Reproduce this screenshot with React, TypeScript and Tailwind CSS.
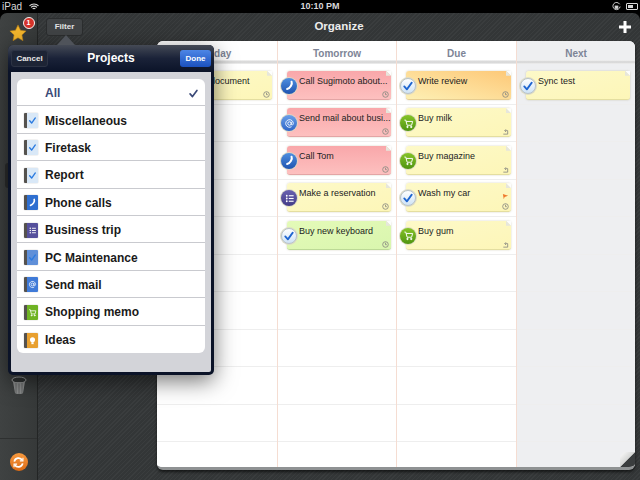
import React from 'react';

type IconKind = 'phone' | 'at' | 'check' | 'cart' | 'list';
type Tone = 'yellow' | 'red' | 'orange' | 'green';
type Mark = 'clock' | 'repeat';

interface Task {
  title: string;
  icon?: IconKind;
  tone: Tone;
  mark?: Mark;
  flag?: boolean;
}

const tones: Record<Tone, string> = {
  yellow: 'bg-gradient-to-br from-[#fdf9c8] to-[#fdf6b8] border-b-[#e4dea0]',
  red: 'bg-gradient-to-b from-[#f9a7aa] to-[#fdc0bf] border-b-[#e3a5a5]',
  orange: 'bg-gradient-to-bl from-[#fdc877] to-[#fdf0b4] border-b-[#e6cc90]',
  green: 'bg-gradient-to-br from-[#e4fab8] to-[#d9f6ae] border-b-[#bcd996]',
};

const columns: { name: string; tasks: Task[]; muted?: boolean }[] = [
  { name: 'Today', tasks: [{ title: 'Review document', tone: 'yellow', mark: 'clock' }] },
  {
    name: 'Tomorrow',
    tasks: [
      { title: 'Call Sugimoto about...', icon: 'phone', tone: 'red', mark: 'clock' },
      { title: 'Send mail about busi...', icon: 'at', tone: 'red', mark: 'clock' },
      { title: 'Call Tom', icon: 'phone', tone: 'red', mark: 'clock' },
      { title: 'Make a reservation', icon: 'list', tone: 'yellow', mark: 'clock' },
      { title: 'Buy new keyboard', icon: 'check', tone: 'green', mark: 'clock' },
    ],
  },
  {
    name: 'Due',
    tasks: [
      { title: 'Write review', icon: 'check', tone: 'orange', mark: 'clock' },
      { title: 'Buy milk', icon: 'cart', tone: 'yellow', mark: 'repeat' },
      { title: 'Buy magazine', icon: 'cart', tone: 'yellow', mark: 'repeat' },
      { title: 'Wash my car', icon: 'check', tone: 'yellow', mark: 'clock', flag: true },
      { title: 'Buy gum', icon: 'cart', tone: 'yellow', mark: 'repeat' },
    ],
  },
  { name: 'Next', muted: true, tasks: [{ title: 'Sync test', icon: 'check', tone: 'yellow' }] },
];

const projects: { name: string; book: string; glyph: IconKind | 'bulb' }[] = [
  { name: 'Miscellaneous', book: 'bg-[#d9e8f7]', glyph: 'check' },
  { name: 'Firetask', book: 'bg-[#d9e8f7]', glyph: 'check' },
  { name: 'Report', book: 'bg-[#d9e8f7]', glyph: 'check' },
  { name: 'Phone calls', book: 'bg-[#2f6fd0]', glyph: 'phone' },
  { name: 'Business trip', book: 'bg-[#55509c]', glyph: 'list' },
  { name: 'PC Maintenance', book: 'bg-[#5f8fd8]', glyph: 'check' },
  { name: 'Send mail', book: 'bg-[#3f7ad8]', glyph: 'at' },
  { name: 'Shopping memo', book: 'bg-[#6fb324]', glyph: 'cart' },
  { name: 'Ideas', book: 'bg-[#e8a030]', glyph: 'bulb' },
];

const Glyph = ({ kind, color, size }: { kind: IconKind | 'bulb'; color: string; size: number }) => {
  if (kind === 'check') {
    return (
      <svg width={size} height={size} viewBox="0 0 16 16" fill="none">
        <path d="M3 8.5 L6.5 12.5 L13 3.5" stroke={color} strokeWidth="2.4" strokeLinecap="round" strokeLinejoin="round" />
      </svg>
    );
  }
  if (kind === 'phone') {
    return (
      <svg width={size} height={size} viewBox="0 0 16 16" fill="none">
        <path d="M11 2.5 C12.5 6 9 12 4.5 13" stroke={color} strokeWidth="3" strokeLinecap="round" />
      </svg>
    );
  }
  if (kind === 'at') {
    return (
      <svg width={size} height={size} viewBox="0 0 16 16" fill="none" stroke={color} strokeWidth="1.3">
        <circle cx="8" cy="8" r="2.5" />
        <path d="M10.5 5.5 V9 C10.5 11 13.5 10.5 13.5 8 A5.5 5.5 0 1 0 11 12.6" />
      </svg>
    );
  }
  if (kind === 'cart') {
    return (
      <svg width={size} height={size} viewBox="0 0 16 16" fill="none" stroke={color} strokeWidth="1.4">
        <path d="M2 3 H4 L6 10.5 H12.5 L14 5 H4.6" strokeLinejoin="round" />
        <circle cx="6.5" cy="13" r="1" fill={color} />
        <circle cx="12" cy="13" r="1" fill={color} />
      </svg>
    );
  }
  if (kind === 'bulb') {
    return (
      <svg width={size} height={size} viewBox="0 0 16 16" fill={color}>
        <circle cx="8" cy="6.5" r="4.5" />
        <rect x="6" y="11" width="4" height="3.5" />
      </svg>
    );
  }
  return (
    <svg width={size} height={size} viewBox="0 0 16 16" fill={color}>
      <circle cx="4" cy="4" r="1.3" />
      <circle cx="4" cy="8" r="1.3" />
      <circle cx="4" cy="12" r="1.3" />
      <rect x="7" y="3.2" width="7" height="1.6" />
      <rect x="7" y="7.2" width="7" height="1.6" />
      <rect x="7" y="11.2" width="7" height="1.6" />
    </svg>
  );
};

const badgeFaces: Record<IconKind, string> = {
  phone: 'bg-gradient-to-b from-[#4f8fe0] to-[#1f54b0]',
  at: 'bg-gradient-to-b from-[#6a9fe8] to-[#2f66c8]',
  check: 'bg-gradient-to-b from-[#ffffff] to-[#cfe3f5] border border-[#b9c4cc]',
  cart: 'bg-gradient-to-b from-[#86c428] to-[#4f9410]',
  list: 'bg-gradient-to-b from-[#6a62b0] to-[#443c88]',
};

const TaskBadge = ({ kind }: { kind: IconKind }) => (
  <div className="absolute left-[-7px] top-[6px] w-[18px] h-[18px] rounded-full bg-[#dcd9c4]/90 flex items-center justify-center">
    <div className={`w-[16px] h-[16px] rounded-full flex items-center justify-center ${badgeFaces[kind]}`}>
      <Glyph kind={kind} color={kind === 'check' ? '#1f66d0' : '#ffffff'} size={kind === 'check' ? 12 : 11} />
    </div>
  </div>
);

const TaskMark = ({ mark }: { mark: Mark }) => (
  <svg className="absolute right-[2px] bottom-[1px]" width="7" height="7" viewBox="0 0 8 8" fill="none" stroke="#8d8d84" strokeWidth="1">
    {mark === 'clock' ? (
      <>
        <circle cx="4" cy="4" r="3.2" />
        <path d="M4 2 V4.2 H5.5" />
      </>
    ) : (
      <path d="M1.5 7 H6.5 V3 H3.5 M4.5 1.5 L3 3 L4.5 4.5" />
    )}
  </svg>
);

const TaskCard = ({ task }: { task: Task }) => (
  <div className={`relative h-[29px] ml-[9px] mr-[5px] rounded-[3px] border-b pl-[12px] pt-[5px] shadow-[0_0_2px_rgba(120,110,60,0.35)] ${tones[task.tone]}`}>
    <span className="block text-[9px] leading-[11px] text-[#222] whitespace-nowrap">{task.title}</span>
    <div className="absolute top-0 right-0 w-[5px] h-[5px] bg-[#fdfdfd] [clip-path:polygon(0_0,100%_100%,100%_0)]" />
    <div className="absolute top-0 right-0 w-[5px] h-[5px] bg-[#e6e6dc] [clip-path:polygon(0_0,100%_100%,0_100%)]" />
    {task.icon && <TaskBadge kind={task.icon} />}
    {task.mark && <TaskMark mark={task.mark} />}
    {task.flag && (
      <svg className="absolute right-[2px] top-[10px]" width="7" height="7" viewBox="0 0 8 8">
        <path d="M1 1 L7 3 L3 4.5 L2 7 Z" fill="#ef7a2c" />
      </svg>
    )}
  </div>
);

const BoardColumn = ({ name, tasks, muted }: { name: string; tasks: Task[]; muted?: boolean }) => {
  const rows = Array.from({ length: 10 }, (_, i) => tasks[i]);
  return (
    <div className={`flex flex-col min-w-0 ${muted ? 'bg-[#eeeff1]' : 'bg-white border-r border-[#f5ddd2]'}`}>
      <div className="h-[19px] pt-[6px] text-center text-[10px] leading-[14px] font-bold text-[#7d8496]">{name}</div>
      <div className="h-[4px] mb-[3px] bg-gradient-to-b from-[#f4f4f4] via-[#d2d2d2] to-[#f1f1f1]" />
      {rows.map((task, i) => (
        <div key={i} className="h-[37.5px] shrink-0 flex flex-col justify-center border-b border-[#eeeeee]">
          {task && <TaskCard task={task} />}
        </div>
      ))}
    </div>
  );
};

const Notebook = ({ face, glyph }: { face: string; glyph: IconKind | 'bulb' }) => (
  <div className="w-[14px] h-[15px] flex rounded-[1px] overflow-hidden shadow-[0_0_1px_rgba(0,0,0,0.5)]">
    <div className="w-[3px] bg-[#55524e]" />
    <div className={`flex-1 flex items-center justify-center ${face}`}>
      <Glyph kind={glyph} color={glyph === 'check' ? '#2a7ae0' : '#ffffff'} size={9} />
    </div>
  </div>
);

const ProjectsPopover = () => (
  <div className="absolute left-[8px] top-[45px] w-[206px] h-[330px] rounded-[5px] bg-[#0b1328] p-[3px] shadow-[0_6px_22px_rgba(0,0,0,0.55)] font-['Liberation_Sans',sans-serif]">
    <div className="absolute left-[49px] top-[-10px] w-[18px] h-[10px] bg-[#4f535a] [clip-path:polygon(50%_0,100%_100%,0_100%)]" />
    <div className="-mx-[3px] -mt-[3px] pt-[5px] px-[3px] h-[27px] rounded-t-[5px] bg-gradient-to-b from-[#454a55] via-[#1a2238] to-[#0b1328] grid grid-cols-[1fr_auto_1fr] items-start">
      <div className="justify-self-start w-[37px] h-[17px] rounded-[3px] bg-[#1d2435] border border-[#2c3344] flex items-center justify-center text-[8px] font-bold text-[#e8e8e8]">Cancel</div>
      <div className="text-[12px] leading-[17px] font-bold text-white">Projects</div>
      <div className="justify-self-end w-[31px] h-[17px] rounded-[3px] bg-gradient-to-b from-[#4d86e6] to-[#1b50bd] flex items-center justify-center text-[8px] font-bold text-white">Done</div>
    </div>
    <div className="h-[300px] bg-[#d3d4d9] rounded-b-[2px] px-[6px] pt-[7px]">
      <div className="bg-white rounded-[6px] overflow-hidden">
        <div className="h-[27.4px] pt-[2px] flex items-center pl-[28px] pr-[6px] justify-between border-b border-[#c9cacf]">
          <span className="text-[12px] font-bold text-[#3b4a78]">All</span>
          <Glyph kind="check" color="#3b4a78" size={11} />
        </div>
        {projects.map((p, i) => (
          <div key={p.name} className={`h-[27.4px] pt-[2px] flex items-center gap-[7px] pl-[7px] ${i < projects.length - 1 ? 'border-b border-[#c9cacf]' : ''}`}>
            <Notebook face={p.book} glyph={p.glyph} />
            <span className="text-[12px] font-bold text-[#1a1a1a]">{p.name}</span>
          </div>
        ))}
      </div>
    </div>
  </div>
);

const StatusBar = () => (
  <div className="h-[13px] shrink-0 bg-black grid grid-cols-[1fr_auto_1fr] items-center px-[2px] text-[10px] leading-[13px] text-[#d8d8d8]">
    <div className="flex items-center gap-[7px]">
      <span>iPad</span>
      <svg width="10" height="8" viewBox="0 0 10 8" fill="none" stroke="#d8d8d8" strokeWidth="1.1">
        <path d="M0.5 2.8 C3 0.4 7 0.4 9.5 2.8 M2 4.4 C3.7 2.9 6.3 2.9 8 4.4 M3.6 5.9 C4.4 5.3 5.6 5.3 6.4 5.9" />
      </svg>
    </div>
    <span className="font-bold text-[9px]">10:10 PM</span>
    <div className="flex items-center justify-end gap-[5px]">
      <svg width="9" height="9" viewBox="0 0 10 10" fill="none" stroke="#d8d8d8" strokeWidth="1">
        <path d="M8.5 2.5 A4 4 0 1 0 9 5" />
        <rect x="3.5" y="4.5" width="3" height="2.5" fill="#d8d8d8" />
      </svg>
      <div className="w-[12px] h-[7px] border border-[#d8d8d8] rounded-[1px] p-[1px]">
        <div className="w-[5px] h-full bg-[#d8d8d8]" />
      </div>
    </div>
  </div>
);

const Sidebar = () => (
  <div className="w-[38px] shrink-0 border-r border-[#232525] bg-gradient-to-r from-[#3f4242] to-[#363939] flex flex-col items-center">
    <div className="relative mt-[10px] h-[20px] w-[20px]">
      <svg className="absolute left-[0px] top-[1px]" width="18" height="18" viewBox="0 0 20 20">
        <path d="M10 1 L12.8 7 L19 7.8 L14.4 12.2 L15.6 18.6 L10 15.4 L4.4 18.6 L5.6 12.2 L1 7.8 L7.2 7 Z" fill="#f3b52c" stroke="#b97f18" strokeWidth="0.6" />
      </svg>
      <div className="absolute left-[14px] top-[-6px] w-[12px] h-[12px] rounded-full bg-[#d5332a] border border-[#f5f5f5] flex items-center justify-center text-[7px] font-bold text-white">1</div>
    </div>
    <div className="self-start ml-[5px] mt-[120px] w-[28px] h-[25px] rounded-[3px] bg-[#2c2e2e]" />
    <div className="mt-[188px]">
      <svg width="16" height="19" viewBox="0 0 16 19" fill="none">
        <ellipse cx="8" cy="4" rx="7" ry="3" stroke="#9a9c9c" strokeWidth="1" fill="#2f3232" />
        <path d="M2 6 L4 17 C5.5 18.4 10.5 18.4 12 17 L14 6" fill="#8b8d8d" />
        <path d="M5 7 V17 M8 7.5 V18 M11 7 V17" stroke="#5c5e5e" strokeWidth="0.8" />
      </svg>
    </div>
    <div className="w-full mt-[43px] border-t border-[#2e3030]" />
    <div className="mt-[14px] w-[18px] h-[18px] rounded-full bg-gradient-to-b from-[#f79a3e] to-[#dc6a12] flex items-center justify-center">
      <svg width="13" height="13" viewBox="0 0 14 14" fill="none" stroke="#fff" strokeWidth="1.8">
        <path d="M2.5 6 A4.6 4.6 0 0 1 11 4.5 M11.5 8 A4.6 4.6 0 0 1 3 9.5" />
        <path d="M11.8 1.8 V5.2 H8.5 M2.2 12.2 V8.8 H5.5" strokeWidth="1.2" />
      </svg>
    </div>
  </div>
);

export default function App() {
  return (
    <div className="relative w-[640px] h-[480px] overflow-hidden bg-black flex flex-col font-['Liberation_Sans',sans-serif]">
      <StatusBar />
      <div className="flex-1 min-h-0 flex rounded-t-[7px] overflow-hidden">
        <Sidebar />
        <div className="flex-1 min-w-0 flex flex-col bg-[repeating-linear-gradient(135deg,#3a3d3e_0,#3a3d3e_1px,#333637_1px,#333637_3px)]">
          <div className="h-[28px] shrink-0 grid grid-cols-[1fr_auto_1fr] items-center">
            <div className="pl-[8px]">
              <div className="w-[37px] h-[18px] rounded-[3px] bg-[#404345] border border-[#2b2d2e] flex items-center justify-center text-[8px] font-bold text-[#e4e4e4]">Filter</div>
            </div>
            <span className="text-[11.5px] font-bold text-[#ececec]">Organize</span>
            <div className="flex justify-end pr-[9px]">
              <svg width="12" height="12" viewBox="0 0 12 12" fill="#fff">
                <rect x="4.5" y="0" width="3" height="12" />
                <rect x="0" y="4.5" width="12" height="3" />
              </svg>
            </div>
          </div>
          <div className="relative ml-[119px] mr-[5px] h-[429px] rounded-[6px] overflow-hidden grid grid-cols-[121px_119px_120px_1fr] bg-white shadow-[0_2px_3px_rgba(0,0,0,0.6)] border-b-[3px] border-[#8f9293]">
            {columns.map(c => (
              <BoardColumn key={c.name} name={c.name} tasks={c.tasks} muted={c.muted} />
            ))}
            <div className="absolute right-0 bottom-0 w-[15px] h-[15px] bg-[#3a3d3e] [clip-path:polygon(100%_0,100%_100%,0_100%)]" />
            <div className="absolute right-0 bottom-0 w-[15px] h-[15px] bg-gradient-to-br from-[#ffffff] to-[#a9aca9] [clip-path:polygon(100%_0,0_100%,0_30%,30%_0)]" />
          </div>
        </div>
      </div>
      <ProjectsPopover />
    </div>
  );
}
